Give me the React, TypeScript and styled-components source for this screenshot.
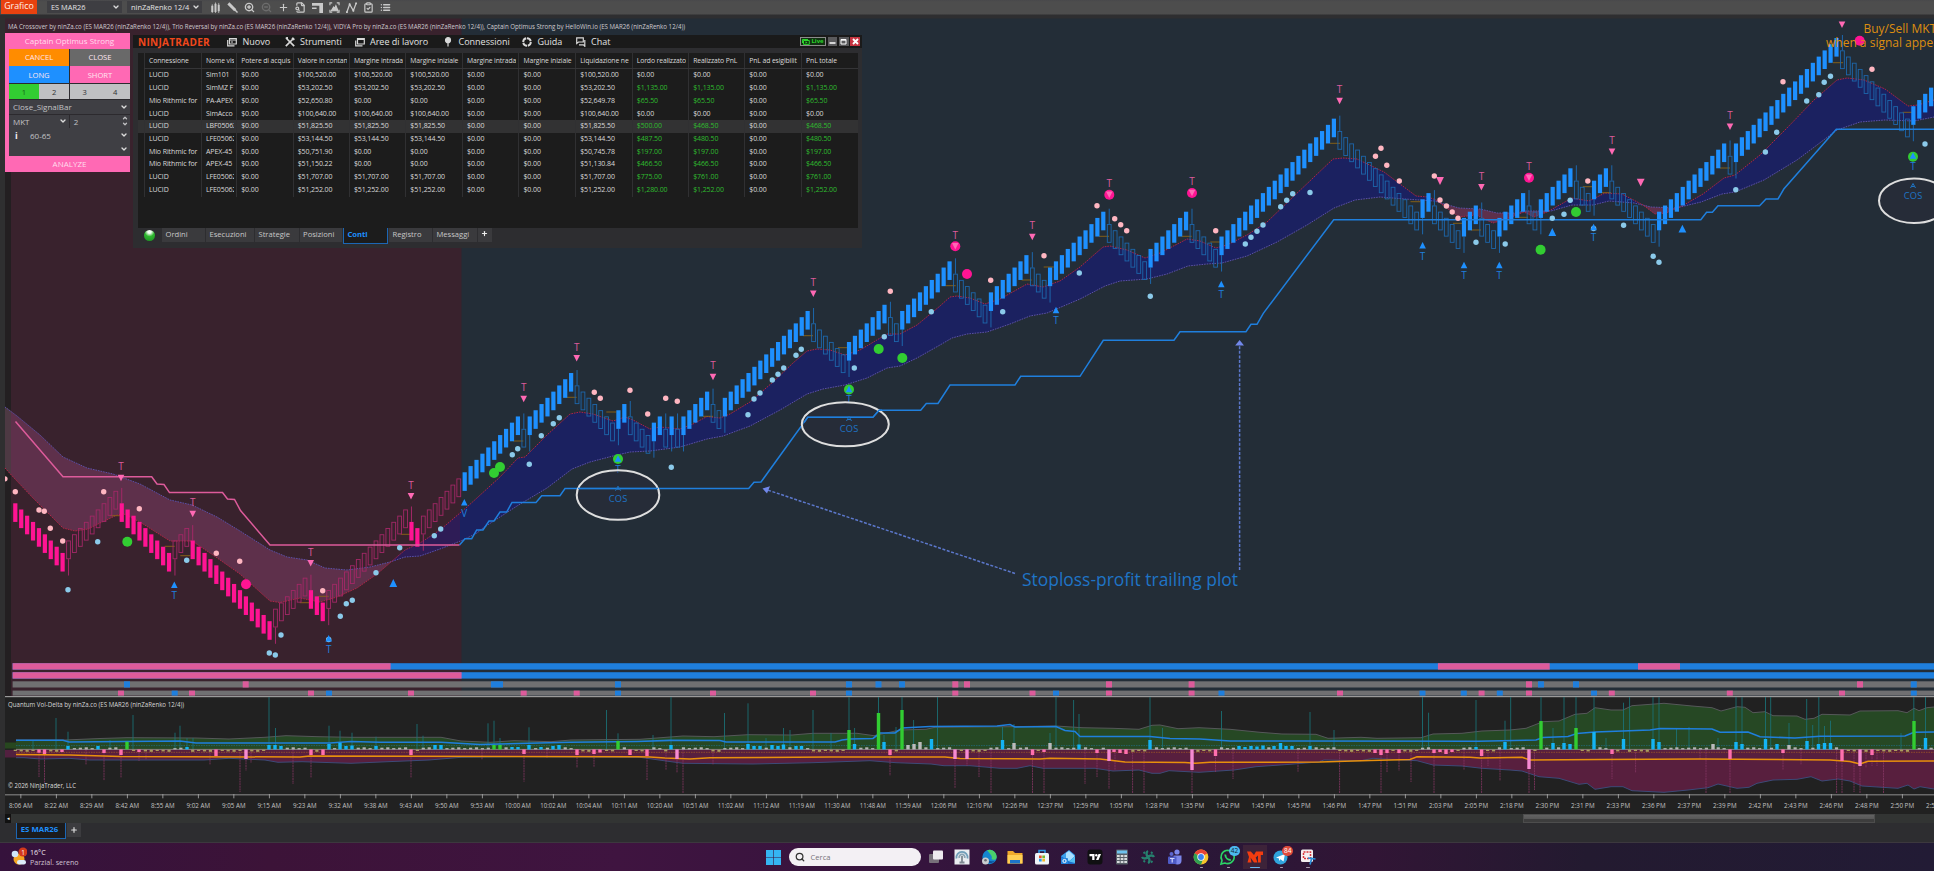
import { ReactNode } from "react";
import styled, { createGlobalStyle, css } from "styled-components";
import {
  LuChevronDown,
  LuChevronUp,
  LuClipboardCheck,
  LuFileSearch,
  LuList,
  LuPlus,
  LuSearch,
  LuZoomIn,
  LuZoomOut,
} from "react-icons/lu";

const theme = {
  font: `"Open Sans", "Noto Sans", sans-serif`,
  blue: "#1e90ff",
  midBlue: "#1f7fdd",
  dimBlue: "#1d67ac",
  pink: "#ff69b4",
  barPink: "#dd5b9b",
  deepPink: "#ff1493",
  green: "#32cd32",
  maroon: "#39222d",
  slate: "#232d37",
  navy: "#1b2160",
  plum: "#5e304b",
  panel: "#2d2d30",
  dark: "#1c1c1c",
};

type Point = [number, number];

const GlobalStyle = createGlobalStyle`
  * { box-sizing: border-box; }
  body {
    margin: 0;
    background: ${theme.panel};
    font-family: ${theme.font};
    overflow: hidden;
  }
`;

const Screen = styled.div`
  position: relative;
  width: 1934px;
  height: 871px;
  display: flex;
  flex-direction: column;
  overflow: hidden;
`;

/* ---------- top toolbar ---------- */

const Toolbar = styled.div`
  height: 18px;
  flex: none;
  display: flex;
  align-items: flex-start;
  background: linear-gradient(#48484b 0, #4d4d4d 2px, #4d4d4d 14px, #2e2e30 15px);
`;

const ChartTag = styled.div`
  width: 36px;
  height: 14px;
  margin-left: 1px;
  background: #e8420f;
  color: #fff1ea;
  font-size: 8.8px;
  line-height: 13px;
  text-align: center;
`;

const ToolbarSelect = styled.div<{ $width: number; $left: number }>`
  display: flex;
  align-items: center;
  justify-content: space-between;
  width: ${(p) => p.$width}px;
  height: 12px;
  margin: 1px 0 0 ${(p) => p.$left}px;
  padding: 0 2px 0 4px;
  background: #3e3e42;
  color: #e4e4e4;
  font-size: 7.4px;
  line-height: 12px;
  white-space: nowrap;
`;

const ToolbarIcons = styled.div`
  display: flex;
  align-items: center;
  gap: 6px;
  height: 14px;
  margin-left: 8px;
  color: #c9c9c9;
  svg {
    width: 11px;
    height: 11px;
  }
  svg:nth-child(4) {
    opacity: 0.25;
  }
`;

/* ---------- charts ---------- */

const ChartSvg = styled.svg`
  display: block;
  flex: none;
`;

const STEP_X = 5.913;
const FIRST_X = 15.3;
const BRICK = 6.204;

// Alternating run lengths, starting with a falling run.
const RUNS = [
  9, 9, 9, 3, 14, 6, 3, 14, 2, 17, 1, 8, 7, 2, 4, 2, 1, 1, 1, 5, 2, 15, 6, 7, 2,
  9, 6, 7, 3, 10, 7, 7, 5, 20, 14, 2, 5, 3, 3, 5, 2, 6, 3, 3, 8, 12, 1, 18, 12, 5,
];

interface Bar {
  x: number;
  top: number;
  up: boolean;
  reversal: boolean;
}

const bars: Bar[] = [];
RUNS.forEach((length, run) => {
  const up = run % 2 === 1;
  for (let i = 0; i < length; i++) {
    const prev = bars[bars.length - 1];
    const reversal = i === 0 && run > 0;
    const move = prev ? (reversal ? 2 : 1) * BRICK * (up ? -1 : 1) : 0;
    bars.push({
      x: FIRST_X + bars.length * STEP_X,
      top: (prev ? prev.top : 503.3) + move,
      up,
      reversal,
    });
  }
});

const fastMa: Point[] = [
  [5, 468], [15, 479], [33, 498], [63, 528], [75, 531], [88, 529], [100, 523], [117, 515], [124, 514],
  [140, 522], [170, 541], [192, 541], [213, 555], [240, 574], [270, 601], [280, 602.5], [300, 598],
  [320, 602], [337, 597], [357, 588], [377, 574], [405, 550], [420, 543], [440, 530], [467, 507],
  [500, 477], [518, 458], [525, 457], [547, 435], [570, 414], [580, 412], [593, 414], [613, 421],
  [625, 417], [633, 420], [650, 429], [660, 427], [680, 429], [693, 424], [707, 416.5], [720, 418],
  [730, 414], [750, 402], [773, 382], [793, 363], [807, 351], [817, 349], [830, 350], [845, 355],
  [860, 350], [887, 334], [900, 334], [917, 325], [940, 306], [950, 297], [957, 296], [970, 298],
  [985, 304], [1000, 299], [1027, 284], [1043, 287], [1060, 281], [1080, 267], [1103, 247],
  [1110, 246], [1127, 250], [1145, 258], [1160, 253], [1187, 239], [1200, 241], [1216, 248],
  [1227, 245], [1247, 235], [1267, 222], [1293, 197], [1333, 159], [1343, 158], [1357, 159],
  [1384, 172], [1416, 196], [1428, 197], [1436, 200], [1459, 217], [1476, 215], [1493, 223],
  [1509, 218], [1524, 212], [1534, 217], [1547, 212], [1572, 198], [1589, 201], [1605, 193],
  [1622, 194], [1643, 205], [1655, 214], [1666, 213], [1682, 206], [1703, 194], [1724, 178],
  [1735, 175], [1760, 155], [1785, 130], [1814, 100], [1837, 80], [1847, 78], [1864, 80],
  [1885, 89], [1908, 106], [1918, 105], [1934, 100],
];

const slowMa: Point[] = [
  [5, 407], [17, 416], [40, 435], [63, 457], [87, 468], [113, 474], [140, 484], [170, 500],
  [192, 505], [217, 517], [240, 531], [270, 550], [287, 557], [307, 560], [325, 568], [347, 570],
  [370, 567], [390, 562], [405, 557], [420, 556], [440, 549], [463, 540], [477, 533], [483, 528],
  [517, 506], [547, 488], [572, 469], [590, 462], [613, 456], [630, 452], [650, 451], [680, 447],
  [707, 439], [723, 436], [750, 426], [780, 410], [807, 394], [823, 389], [845, 385], [867, 378],
  [887, 368], [900, 366], [917, 358], [940, 345], [952, 338], [967, 334], [987, 332], [1010, 324],
  [1030, 316], [1047, 313], [1080, 299], [1105, 286], [1120, 281], [1147, 279], [1167, 274],
  [1188, 266], [1207, 264], [1222, 263], [1247, 256], [1277, 242], [1307, 225], [1334, 208],
  [1355, 200], [1380, 197], [1405, 199], [1434, 201], [1459, 208], [1480, 209], [1497, 213],
  [1514, 213], [1526, 211], [1551, 211], [1572, 205], [1593, 205], [1609, 201], [1634, 203],
  [1651, 207], [1676, 208], [1701, 202], [1722, 194], [1735, 192], [1764, 180], [1797, 160],
  [1837, 130], [1860, 122], [1885, 120], [1914, 121], [1934, 117],
];

const pinkStop: Point[] = [
  [15.5, 421.5], [63, 476.7], [151.7, 476.7], [157, 484], [164, 484.5], [169.5, 492.6],
  [222.5, 492.6], [227.5, 499], [234.5, 499.5], [240.5, 510.5], [270, 545], [459.5, 545],
];

const blueStop: Point[] = [
  [459.5, 545], [465, 538.7], [471.7, 538.7], [476.7, 530], [483, 530], [489, 521], [494, 521],
  [500, 512], [506.7, 512], [512, 502.4], [536, 502.4], [541.7, 495.7], [560, 495.7], [565, 488.6],
  [748.7, 488.6], [754, 482.3], [761, 482], [807.7, 417.3], [873, 417.3], [879, 410.3],
  [920.7, 410.3], [926.3, 403.5], [938, 403.4], [950, 385], [1015, 385], [1020.7, 376.3],
  [1080, 376.3], [1103.3, 340.3], [1174, 340.3], [1180, 331.7], [1246, 331.7], [1251, 324.3],
  [1257, 324.3], [1263.3, 313.3], [1333.7, 219.7], [1700.8, 219.7], [1706.6, 212.3],
  [1712.4, 212.3], [1718, 205.7], [1759.6, 205.7], [1766, 199], [1778, 199], [1783.8, 189],
  [1836.3, 129.3], [1934, 129.3],
];

const pinkDots: Point[] = [
  [15.3, 491.7], [39, 510], [44.3, 511.3], [50.3, 528.3], [62.7, 541], [103.7, 491.7],
  [139.3, 508.7], [216.3, 553.3], [239.7, 561.3], [322.7, 590.7], [594.3, 392.3], [600.3, 398.3],
  [630, 390.3], [647.7, 414], [665.7, 398.3], [677.3, 401.3], [890.3, 291.3], [990.7, 280.3],
  [1044, 255.7], [1097, 205.7], [1114.7, 218.7], [1120.7, 224.7], [1126.7, 230.7], [1215.7, 230.7],
  [1375.5, 156.3], [1381, 148.3], [1386.8, 165.3], [1399.3, 181], [1434.3, 176], [1440, 200],
  [1446.4, 206], [1452.2, 212], [1458, 218.3], [1587.8, 181], [1783, 81.7], [1872, 69.3],
];

const blueDots: Point[] = [
  [68, 589.7], [97.7, 541.7], [186.7, 560.3], [269.3, 653], [275.3, 655], [281, 635],
  [340.3, 616.3], [346.3, 603.7], [352.3, 600.3], [376, 572.7], [399.7, 547.7], [434.3, 535.7],
  [440.7, 529], [328.7, 639.5], [512.3, 454.7], [517.7, 448.7], [529.3, 464.3], [541.3, 435.7],
  [553.3, 423.7], [559.3, 417.7], [671.3, 467.3], [748, 414.7], [754, 399], [760, 393],
  [772.3, 380], [778, 374.3], [783.7, 368], [796, 355.3], [801.3, 349.3], [854.3, 368],
  [884.3, 336.7], [931.3, 311.7], [1002.7, 311.7], [1079.3, 273], [1150.3, 296.3],
  [1245.3, 244], [1251, 237.3], [1257, 231.3], [1263, 225], [1280.7, 206.7], [1286.7, 200.3],
  [1292.7, 193.7], [1310, 192.5], [1476, 242.3], [1505.2, 244], [1552.3, 218.3], [1564, 214.3],
  [1570.2, 200.3], [1593.6, 228.5], [1623.6, 225.3], [1653.2, 256.3], [1659, 262.3],
  [1735.8, 189.7], [1765.4, 152], [1776.7, 132.3], [1806.7, 101], [1818.8, 94.7],
  [1824.2, 82.3], [1830.5, 76.3], [1925, 144],
];

const goldMarks: Point[] = [
  [115.3, 515.7], [169.7, 546.3], [185.3, 555.7], [304.7, 602.7], [323.7, 596.3], [405.7, 534.3],
  [518.3, 441], [571.7, 397.3], [611.3, 412], [708, 416.3], [808, 335.7], [843, 347.7],
  [950.7, 285.7], [1026.7, 280], [1048.7, 267], [1104, 236.3], [1186.7, 236.3], [1215.3, 242],
  [1335, 143.3], [1415.5, 201.7], [1458, 223.3], [1476, 230], [1523, 217.3], [1587.8, 186.7],
  [1606, 192.7], [1725, 168], [1838, 62.7], [1907.6, 112.3],
];

const greenCircles: Point[] = [
  [127.3, 541.7], [494, 473], [500, 467], [618, 459], [849, 389.5], [878.7, 349], [902.3, 358],
  [1576, 212], [1540.6, 249.7], [1913, 156.7],
];

const pinkCircles: Point[] = [
  [246, 584.3], [955.3, 246.3], [967, 274], [1109.3, 194.7], [1192, 193], [1529, 177.7], [1859.7, 40.7],
];

const sellMarks: Point[] = [
  [121, 478], [192.7, 514], [310.7, 563.3], [411, 496.3], [523.7, 399], [576.7, 358.3],
  [713, 377], [813.3, 293.7], [955.3, 246.3], [1032.3, 237], [1109.3, 194.7], [1192, 193],
  [1339.6, 101], [1481.4, 187.3], [1529, 177.7], [1612, 151.7], [1730, 126.7], [1842, 24.7],
];

const buyMarks: [number, number, string][] = [
  [174.3, 584.7, "T"], [328.7, 638.3, "T"], [464.3, 502.3, "V"], [618, 458.5, "T"],
  [849, 389, "T"], [1056, 310, "T"], [1221.3, 284, "T"], [1422.6, 245.3, "T"], [1464, 265, "T"],
  [1499.3, 265, "T"], [1593.6, 227, "T"], [1913, 155.5, "T"],
];

const sellTurns: Point[] = [[1440, 181], [1640.7, 182.7]];
const buyTurns: Point[] = [[393.3, 583], [1552.3, 232], [1682.4, 228.7]];

const toPoints = (points: Point[]) => points.map((p) => p.join(",")).join(" ");

function valueAt(points: Point[], x: number) {
  const i = points.findIndex((p) => p[0] >= x);
  if (i <= 0) return points[0][1];
  const [x0, y0] = points[i - 1];
  const [x1, y1] = points[i];
  return y0 + ((y1 - y0) * (x - x0)) / (x1 - x0);
}

// Splits the space between the averages wherever they cross.
const clouds: { bullish: boolean; upper: Point[]; lower: Point[] }[] = [];
for (let x = 5; x <= 1934; x++) {
  const fast = valueAt(fastMa, x);
  const slow = valueAt(slowMa, x);
  const bullish = fast < slow;
  let last = clouds[clouds.length - 1];
  if (!last || last.bullish !== bullish) {
    last = { bullish, upper: [], lower: [] };
    clouds.push(last);
  }
  last.upper.push([x, fast]);
  last.lower.unshift([x, slow]);
}

function Triangle({ x, y, size, up, fill }: { x: number; y: number; size: number; up?: boolean; fill: string }) {
  const d = up ? -size : size;
  return <polygon points={`${x - size},${y - d} ${x + size},${y - d} ${x},${y + d}`} fill={fill} />;
}

function Candle({ bar, prev }: { bar: Bar; prev?: Bar }) {
  const height = BRICK * 3;
  const bear = bar.x < 461;
  const solid = bear ? !bar.up : bar.up;
  const color = bear ? (solid ? theme.deepPink : "#a32867") : solid ? theme.blue : theme.dimBlue;
  const wickColor = bear ? "#a32867" : theme.dimBlue;
  const wickEnd = prev && (bar.up ? prev.top + height + 4 : prev.top - 3);
  return (
    <g>
      {bar.reversal && (
        <line x1={bar.x} x2={bar.x} y1={bar.up ? bar.top + height : bar.top} y2={wickEnd} stroke={wickColor} />
      )}
      {solid ? (
        <rect x={bar.x - 2.1} y={bar.top} width={4.2} height={height} fill={color} />
      ) : (
        <rect x={bar.x - 1.9} y={bar.top + 0.4} width={3.8} height={height - 0.8} fill="none" stroke={color} strokeWidth={0.9} />
      )}
    </g>
  );
}

interface Strip {
  y: number;
  height: number;
  base: string;
  marks: [number, number, string][];
}

const P = theme.barPink;
const B = theme.midBlue;
const square = (xs: number[], color: string): [number, number, string][] => xs.map((x) => [x - 3, 6, color]);

const strips: Strip[] = [
  { y: 663.2, height: 6.4, base: B, marks: [[12.6, 378, P], [1437.9, 111.8, P], [1638, 42, P]] },
  { y: 672.2, height: 6.4, base: B, marks: [[12.6, 449, P]] },
  {
    y: 681.3,
    height: 6.2,
    base: "#707072",
    marks: [
      ...square([127, 494, 500, 618, 849, 878.5, 902, 1541, 1576, 1913.8], B),
      ...square([245.7, 955.3, 967, 1109, 1191.6, 1529, 1860], P),
    ],
  },
  {
    y: 690.6,
    height: 5,
    base: "#707072",
    marks: [
      ...square([174.7, 329, 618, 849, 1056, 1221.5, 1422.5, 1463.8, 1499.8, 1594, 1913.8], B),
      ...square([121, 192, 311, 411, 523.7, 576.7, 713, 813, 955.3, 1032.5, 1109, 1191.6, 1340, 1481.6, 1529, 1611.8, 1729.8, 1842], P),
    ],
  },
];

const ellipses: [number, number, number, number][] = [
  [618, 495, 41.3, 24.8],
  [845.3, 424.3, 43.5, 22],
  [1914, 200.7, 35, 22.3],
];
const cosLabels: Point[] = [[618, 498.7], [849, 429], [1913, 196]];

function PriceChart() {
  return (
    <ChartSvg width="1934" height="678" viewBox="0 18 1934 678" fontFamily={theme.font}>
      <rect y="18" width="1934" height="678" fill="#2f2f30" />
      <rect x="5" y="18.5" width="457" height="678" fill={theme.maroon} />
      <rect x="5" y="35" width="6" height="662" fill="#231f21" />
      <rect x="461.5" y="18.5" width="1473" height="678" fill={theme.slate} />
      <text x="8" y="28.5" fontSize="7.4" fill="#cfcbcf" textLength="677" lengthAdjust="spacingAndGlyphs">
        MA Crossover by ninZa.co (ES MAR26 (ninZaRenko 12/4)), Trio Reversal by ninZa.co (ES MAR26 (ninZaRenko
        12/4)), VIDYA Pro by ninZa.co (ES MAR26 (ninZaRenko 12/4)), Captain Optimus Strong by HelloWin.io (ES
        MAR26 (ninZaRenko 12/4))
      </text>

      {clouds.map((cloud, i) => (
        <polygon
          key={i}
          points={toPoints([...cloud.upper, ...cloud.lower])}
          fill={cloud.bullish ? theme.navy : theme.plum}
        />
      ))}
      <polygon points={toPoints([...clouds[1].upper, ...clouds[1].lower].filter((p) => p[0] < 461))} fill="#2e1c56" />
      <polygon points="5,407 11,411 11,475 5,468" fill="#4d3943" />
      <polyline points={toPoints(slowMa)} fill="none" stroke="#5b50a8" strokeDasharray="1.6 1" />
      <polyline points={toPoints(fastMa)} fill="none" stroke="#b02545" strokeDasharray="1.6 1" />

      {goldMarks.map(([x, y], i) => (
        <line key={i} x1={x - 5} x2={x + 5} y1={y} y2={y} stroke="#8d6414" strokeWidth={0.9} />
      ))}
      {bars.map((bar, i) => (
        <Candle key={i} bar={bar} prev={bars[i - 1]} />
      ))}

      <polyline points={toPoints(pinkStop)} fill="none" stroke={theme.barPink} strokeWidth={1.5} />
      <polyline points={toPoints(blueStop)} fill="none" stroke={theme.midBlue} strokeWidth={1.5} />

      <path d="M5 476.2A2.600 2.600 0 0 1 5 481.400Z" fill="#ffb6c1" />
      {pinkDots.map(([x, y], i) => (
        <circle key={i} cx={x} cy={y} r={2.7} fill="#ffb6c1" />
      ))}
      {greenCircles.map(([x, y], i) => (
        <circle key={i} cx={x} cy={y} r={5} fill={theme.green} />
      ))}
      {pinkCircles.map(([x, y], i) => (
        <circle key={i} cx={x} cy={y} r={5} fill={theme.deepPink} />
      ))}
      {blueDots.map(([x, y], i) => (
        <circle key={i} cx={x} cy={y} r={2.7} fill="#8bcaea" />
      ))}

      <g fontSize="10" textAnchor="middle">
        {sellMarks.map(([x, y], i) => (
          <g key={i}>
            <Triangle x={x} y={y} size={3.3} fill={theme.pink} />
            {y > 30 && (
              <text x={x} y={y - 7.6} fill={theme.barPink}>
                T
              </text>
            )}
          </g>
        ))}
        {buyMarks.map(([x, y, label], i) => (
          <g key={i}>
            <Triangle x={x} y={y} size={3.3} up fill={theme.blue} />
            <text x={x} y={y + 14.4} fill={theme.midBlue}>
              {label}
            </text>
          </g>
        ))}
      </g>
      {sellTurns.map(([x, y], i) => (
        <Triangle key={i} x={x} y={y} size={3.9} fill={theme.pink} />
      ))}
      {buyTurns.map(([x, y], i) => (
        <Triangle key={i} x={x} y={y} size={3.9} up fill={theme.blue} />
      ))}

      {ellipses.map(([cx, cy, rx, ry], i) => (
        <ellipse key={i} cx={cx} cy={cy} rx={rx} ry={ry} fill="#2a2a3a" fillOpacity={0.4} stroke="#dedede" strokeWidth={2} />
      ))}
      <g stroke={theme.midBlue} strokeWidth={1.5} fill="none">
        <polyline points="578,488.6 658,488.6" />
        <polyline points="804,422.5 807.7,417.3 873,417.3 879,410.3 882,410.3" />
      </g>
      <g fill="#1f74c4" fontSize="9.3" textAnchor="middle">
        {cosLabels.map(([x, y], i) => (
          <g key={i}>
            <text x={x} y={y + 3.4} textLength="18.5">
              COS
            </text>
            <path d={`M${x - 2.5} ${y - 8} L${x} ${y - 12.5} L${x + 2.5} ${y - 8} M${x - 1.5} ${y - 9.5} H${x + 1.5}`} fill="none" stroke="#1f74c4" />
          </g>
        ))}
      </g>

      <g stroke="#5c78cc" strokeWidth={1.5} strokeDasharray="3 1.6">
        <line x1="1015" y1="573.5" x2="767" y2="489.8" />
        <line x1="1239.6" y1="570" x2="1239.6" y2="345" />
      </g>
      <g fill="#7288ea">
        <polygon points="762.5,488.6 770,486.3 767,493.6" />
        <polygon points="1239.6,340 1244,345.4 1235.2,345.4" />
      </g>
      <text x="1022" y="585.800" fontSize="17.500" fill="#1f74c6" textLength="216" lengthAdjust="spacingAndGlyphs">
        Stoploss-profit trailing plot
      </text>
      <g fill="#dd8d10" fontSize="12">
        <text x="1863.5" y="33.200">Buy/Sell MKT</text>
        <text x="1826" y="47.200">when a signal appears</text>
      </g>

      {strips.map((strip) => (
        <g key={strip.y}>
          <rect x={12.6} y={strip.y} width={1922} height={strip.height} fill={strip.base} />
          {strip.marks.map(([x, width, color]) => (
            <rect key={x} x={x} y={strip.y} width={width} height={strip.height} fill={color} />
          ))}
        </g>
      ))}
    </ChartSvg>
  );
}

/* ---------- volume delta panel ---------- */

const ZERO = 749.4;

const upperBand: Point[] = [
  [16, 740], [65, 740], [100, 738.5], [127, 737.7], [196, 738], [229, 739], [265, 737.3], [286, 735.7],
  [318, 736.7], [351, 737.3], [441, 737.3], [461, 741], [490, 742.3], [514, 740.7], [551, 741.7],
  [571, 740], [640, 739.3], [683, 736], [714, 736.7], [748, 734.7], [792, 735], [813, 733.3],
  [857, 733.3], [874, 735.7], [900, 730], [926, 729.3], [935, 727.3], [1009, 726.7], [1056, 726],
  [1082, 727.7], [1113, 728.3], [1139, 729.3], [1152, 725.3], [1160, 725], [1178, 728.7],
  [1199, 727.7], [1230, 729.3], [1260, 732.3], [1282, 734], [1316, 734.3], [1328, 738.3],
  [1361, 737.3], [1377, 738.3], [1421, 737.7], [1433, 734], [1462, 733.3], [1482, 731], [1510, 730],
  [1526, 728.3], [1543, 721.7], [1559, 721], [1575, 714.3], [1587, 713.3], [1595, 707.7],
  [1611, 710], [1623, 710], [1632, 705.7], [1664, 703.3], [1692, 706], [1712, 707.7], [1721, 711],
  [1737, 706.7], [1745, 707.3], [1753, 712.7], [1765, 711.7], [1773, 715.7], [1797, 716],
  [1805, 719.3], [1814, 718.3], [1822, 714.3], [1850, 715], [1860, 711], [1898, 710.7],
  [1907, 712.7], [1914, 708.3], [1919, 710.7], [1927, 707.7], [1934, 707],
];

const lowerBand: Point[] = [
  [16, 757.7], [24, 757.7], [41, 759], [69, 758.3], [90, 760], [204, 760], [229, 758.3], [265, 760],
  [278, 762.3], [302, 761.7], [351, 763.3], [388, 761.7], [429, 760], [461, 757.3], [518, 756.7],
  [640, 757.3], [666, 761], [683, 763.3], [753, 764], [813, 762.7], [870, 760.7], [896, 762.7],
  [931, 764], [944, 765.7], [970, 765.7], [1000, 768.3], [1017, 768.3], [1030, 765.7],
  [1043, 768.3], [1095, 768.3], [1113, 771], [1139, 770], [1152, 773.3], [1160, 773.3],
  [1169, 770.7], [1199, 772.3], [1234, 770], [1256, 766.7], [1290, 764.3], [1318, 762],
  [1324, 760], [1361, 760.7], [1373, 758.3], [1401, 760], [1417, 760.7], [1433, 765], [1462, 766],
  [1482, 768.3], [1510, 770], [1522, 771], [1539, 776.7], [1559, 778.3], [1579, 784.3],
  [1587, 783.3], [1595, 789.3], [1611, 786.7], [1623, 786.7], [1632, 790.7], [1664, 792.3],
  [1688, 790], [1708, 787.7], [1718, 784], [1737, 788.3], [1749, 787.3], [1757, 783.3],
  [1773, 780], [1797, 779.3], [1811, 776.7], [1822, 781], [1838, 779], [1850, 781], [1862, 786],
  [1898, 788.3], [1908, 785], [1914, 789], [1920, 786.7], [1934, 789],
];

const buyLine: Point[] = [
  [16, 740.3], [63, 740.3], [69, 742], [180, 741], [196, 743], [330, 743], [351, 741.5], [380, 742.3],
  [441, 742.3], [480, 744.5], [500, 744], [570, 742.3], [637, 741.5], [670, 740.4], [720, 740.5],
  [726, 742], [835, 742], [842, 740], [850, 739], [873, 738.5], [880, 733], [895, 733], [902, 728],
  [930, 726.5], [997, 726], [1010, 724.5], [1015, 727], [1056, 726.5], [1065, 730.5],
  [1075, 731.5], [1080, 736.5], [1150, 736.5], [1170, 738.5], [1200, 739], [1230, 741],
  [1300, 741], [1478, 741.3], [1536, 740], [1543, 737.5], [1568, 736.5], [1577, 733.5],
  [1595, 732], [1650, 730], [1660, 728.5], [1712, 729], [1720, 732.3], [1748, 732],
  [1760, 736.7], [1795, 738], [1820, 736.3], [1905, 736], [1914, 732.3], [1934, 732],
];

const sellLine: Point[] = [
  [16, 754.5], [70, 755], [120, 756.5], [300, 757], [310, 756], [637, 756.8], [650, 757], [665, 758],
  [690, 759], [710, 757.7], [830, 757], [945, 757], [960, 758.5], [1040, 759], [1050, 758.3],
  [1100, 759], [1125, 762], [1185, 762.5], [1195, 763.3], [1210, 762.3], [1320, 762],
  [1370, 760.5], [1410, 759.5], [1417, 756.7], [1470, 757.3], [1480, 758], [1522, 757.3],
  [1530, 760], [1600, 759.5], [1700, 759], [1830, 760], [1850, 761.5], [1860, 764],
  [1868, 761.3], [1934, 761],
];

const upSpikes: Point[] = [
  [33, 741], [56, 718], [68, 731.7], [110, 740], [133, 715], [175, 732.7], [180, 725.7], [187, 738],
  [193, 738], [269, 697], [275.5, 728], [329, 725.7], [340, 730.7], [352, 732.7], [376, 736.7],
  [417, 724], [423, 735.7], [488, 723.3], [494, 720.7], [500, 738], [529, 727.3], [606.5, 710],
  [618, 733.3], [653, 735], [671, 697], [724.5, 713], [748, 703.3], [766, 738], [783.5, 728],
  [790, 730], [813, 710], [831, 733], [849, 697], [854.6, 728], [878.5, 697], [884, 735],
  [896, 727], [902, 697], [913.6, 720], [937.5, 697], [1002.5, 727], [1014, 724], [1050, 733],
  [1056, 697], [1073.6, 700], [1079, 714], [1150, 697], [1162.5, 728], [1221.5, 711], [1310, 712],
  [1334, 730], [1422.5, 697], [1428.6, 712.7], [1476, 700], [1505, 720.7], [1510.7, 697],
  [1541, 697], [1553, 728], [1564, 697], [1576, 697], [1594, 697], [1606, 738], [1623.5, 702.7],
  [1629.6, 697], [1653, 697], [1659, 697], [1676.5, 729], [1689, 727], [1718, 738], [1736, 697],
  [1742, 697], [1765.5, 697], [1770.7, 697], [1789, 723], [1806.7, 699], [1812.7, 725],
  [1818.8, 697], [1824.5, 726], [1830.5, 720.7], [1901, 733], [1913.8, 697], [1925.5, 697],
];

const downSpikes: Point[] = [
  [39, 777], [44.5, 783], [86, 765], [104, 780.7], [121, 778], [139, 761], [146, 760], [210, 765],
  [240, 792], [246, 770.7], [251, 763], [293, 784], [311, 778], [411, 778], [482, 760], [524, 781.7],
  [547, 758], [577, 768], [594, 766.7], [647, 780], [666, 770], [677, 773], [683, 793], [713, 765],
  [890, 775.7], [955, 788], [967, 766], [979, 777], [991, 793], [1032.5, 793], [1044, 793],
  [1085, 784], [1097, 777], [1109, 789], [1115, 770], [1132.6, 793], [1144, 793], [1192, 793],
  [1215.5, 772], [1233, 779], [1298, 771.7], [1339.6, 793], [1381, 793], [1387, 772],
  [1399, 770.7], [1411, 782], [1434, 793], [1464, 770], [1481.6, 793], [1488, 766], [1500, 781],
  [1529, 793], [1534.5, 790], [1612, 779], [1635.6, 773], [1700, 760], [1706, 793], [1730, 793],
  [1783, 770], [1801, 765], [1836.6, 793], [1842, 793], [1854, 792], [1860, 793], [1866, 768],
  [1872, 766], [1877, 766], [1883.5, 793],
];

const GREEN = "#32cd32";
const CYAN = "#14b4f4";
const ROSE = "#ff6fae";
const VIOLET = "#f78ad2";

const volumeBars: [number, number, string][] = [
  [127, 741.7, GREEN], [494, 745, GREEN], [500, 745, GREEN], [618, 741, GREEN], [849, 730, GREEN],
  [878.5, 713, GREEN], [902, 710, GREEN], [1541, 721, GREEN], [1576, 728, GREEN], [1914, 721, GREEN],
  [68, 746, CYAN], [98, 746, CYAN], [187, 747, CYAN], [269, 745, CYAN], [275, 745, CYAN],
  [281, 746, CYAN], [329, 744, CYAN], [340, 742.7, CYAN], [346, 746, CYAN], [352, 745.5, CYAN],
  [376, 746, CYAN], [435, 745, CYAN], [441, 745, CYAN], [512, 747, CYAN], [518, 747, CYAN],
  [529, 745, CYAN], [541, 747, CYAN], [553, 746, CYAN], [559, 745, CYAN], [671, 745, CYAN],
  [748, 744, CYAN], [754, 746, CYAN], [760, 746, CYAN], [772, 745, CYAN], [778, 746, CYAN],
  [783.5, 744.5, CYAN], [796, 746, CYAN], [801.5, 746, CYAN], [854.5, 744, CYAN], [884, 742, CYAN],
  [931.5, 739, CYAN], [1002.5, 740, CYAN], [1079, 744.5, CYAN], [1150, 740, CYAN],
  [1239, 746, CYAN], [1245, 747, CYAN], [1251, 746, CYAN], [1257, 746.5, CYAN], [1263, 745.5, CYAN],
  [1274, 746, CYAN], [1280.5, 743, CYAN], [1286, 746, CYAN], [1292, 746, CYAN], [1310, 746, CYAN],
  [1476, 747, CYAN], [1505, 742, CYAN], [1553, 743, CYAN], [1564, 743, CYAN], [1570, 744, CYAN],
  [1594, 732, CYAN], [1623.5, 739, CYAN], [1653, 739, CYAN], [1659, 742, CYAN], [1736, 742, CYAN],
  [1742, 744, CYAN], [1765.5, 739, CYAN], [1777, 744, CYAN], [1807, 741, CYAN], [1818.5, 744, CYAN],
  [1824.5, 743, CYAN], [1830.5, 743, CYAN], [1925.5, 738, CYAN],
  [908, 745, "#bbb"], [914, 744, "#bbb"], [920, 742, "#bbb"], [1014, 743, "#bbb"], [1050, 743, "#bbb"],
  [1713, 744, "#bbb"], [1789, 745, "#bbb"],
  [39, 752.7, ROSE], [44.5, 754, ROSE], [62, 752, ROSE], [104, 753, ROSE], [121, 755, ROSE],
  [139, 752, ROSE], [216, 756, ROSE], [311, 755, ROSE], [323, 755, ROSE], [411, 755, ROSE],
  [524, 754, ROSE], [577, 755, ROSE], [594, 754, ROSE], [600, 752.5, ROSE], [630, 755, ROSE],
  [647, 756, ROSE], [890, 755, ROSE], [1032.5, 755, ROSE], [1044, 752, ROSE], [1097, 753, ROSE],
  [1114, 752, ROSE], [1120, 753, ROSE], [1126, 754, ROSE], [1215.5, 756, ROSE], [1375, 753, ROSE],
  [1381, 755, ROSE], [1387, 753, ROSE], [1399, 753, ROSE], [1434, 753, ROSE], [1440, 752, ROSE],
  [1446, 754, ROSE], [1452, 752, ROSE], [1481.6, 756, ROSE], [1612, 754, ROSE], [1730, 759, ROSE],
  [1783, 753, ROSE], [1842, 761, ROSE], [1872, 755, ROSE],
  [246, 759, VIOLET], [677, 759, VIOLET], [955, 759, VIOLET], [967, 759, VIOLET],
  [1109, 761, VIOLET], [1192, 770, VIOLET], [1529, 769, VIOLET], [1860, 766, VIOLET],
];

const times = [
  "8:06 AM", "8:22 AM", "8:29 AM", "8:42 AM", "8:55 AM", "9:02 AM", "9:05 AM", "9:15 AM", "9:23 AM",
  "9:32 AM", "9:38 AM", "9:43 AM", "9:50 AM", "9:53 AM", "10:00 AM", "10:02 AM", "10:04 AM",
  "10:11 AM", "10:20 AM", "10:51 AM", "11:02 AM", "11:12 AM", "11:19 AM", "11:30 AM", "11:48 AM",
  "11:59 AM", "12:06 PM", "12:10 PM", "12:26 PM", "12:37 PM", "12:59 PM", "1:05 PM", "1:28 PM",
  "1:35 PM", "1:42 PM", "1:45 PM", "1:45 PM", "1:46 PM", "1:47 PM", "1:51 PM", "2:03 PM", "2:05 PM",
  "2:18 PM", "2:30 PM", "2:31 PM", "2:33 PM", "2:36 PM", "2:37 PM", "2:39 PM", "2:42 PM", "2:43 PM",
  "2:46 PM", "2:48 PM", "2:50 PM", "2:51 PM",
];

function DeltaChart() {
  const tall = volumeBars.map((v) => v[0]);
  const small = bars.filter((bar) => !tall.some((x) => Math.abs(x - bar.x) < 3));
  return (
    <ChartSvg width="1934" height="118" viewBox="0 696 1934 118" fontFamily={theme.font}>
      <rect y="696" width="1934" height="118" fill="#2f2f30" />
      <rect x="5" y="696" width="1929" height="118" fill="#212121" />
      <rect x="5" y="696" width="1929" height="1.2" fill="#9a9a9a" />
      <rect x="5" y="742.5" width="11" height="6" fill="#27471f" />
      <rect x="5" y="750" width="11" height="7.5" fill="#52203f" />
      <polygon points={toPoints([...upperBand, [1934, ZERO], [16, ZERO]])} fill="#264824" />
      <polygon points={toPoints([...lowerBand, [1934, ZERO], [16, ZERO]])} fill="#581f3e" />
      <polyline points={toPoints(upperBand)} fill="none" stroke="#56585a" />
      <polyline points={toPoints(lowerBand)} fill="none" stroke="#3d4a78" />
      {upSpikes.map(([x, y]) => (
        <line key={x} x1={x} x2={x} y1={y} y2={ZERO} stroke="#1b7378" opacity={0.85} />
      ))}
      {downSpikes.map(([x, y]) => (
        <line key={x} x1={x} x2={x} y1={ZERO} y2={y} stroke="#843763" opacity={0.8} strokeDasharray="2 0.6" />
      ))}
      <line x1="16" x2="1934" y1="745.6" y2="745.6" stroke="#226a78" strokeWidth={0.8} strokeDasharray="1.5 1" />
      <line x1="16" x2="1934" y1="752.3" y2="752.3" stroke="#9c5527" strokeWidth={0.8} strokeDasharray="1.5 1" />
      <polyline points={toPoints(buyLine)} fill="none" stroke={theme.midBlue} strokeWidth={1.6} />
      <polyline points={toPoints(sellLine)} fill="none" stroke="#e8900c" strokeWidth={1.5} />
      <line x1="16" x2="1934" y1={ZERO} y2={ZERO} stroke="#9b8d94" strokeWidth={0.8} />
      {small.map((bar, i) => (
        <rect
          key={i}
          x={bar.x - 1.6}
          y={bar.up ? ZERO - 1.3 - (i % 3) * 0.4 : ZERO + 0.3}
          width={3.2}
          height={1.3 + (i % 3) * 0.4}
          fill={bar.up ? "#b3b3b3" : "#aa9c5c"}
        />
      ))}
      {volumeBars.map(([x, y, color]) => (
        <rect key={x} x={x - 1.7} y={Math.min(y, ZERO)} width={3.4} height={Math.abs(ZERO - y)} fill={color} />
      ))}
      <text x="8" y="706.8" fontSize="7.4" fill="#d6d6d6" textLength="176" lengthAdjust="spacingAndGlyphs">
        Quantum Vol-Delta by ninZa.co (ES MAR26 (ninZaRenko 12/4))
      </text>
      <text x="8" y="788.2" fontSize="7.4" fill="#dcdcdc" textLength="68" lengthAdjust="spacingAndGlyphs">
        © 2026 NinjaTrader, LLC
      </text>
      <rect x="5" y="794" width="1929" height="1.5" fill="#6a6a6a" />
      <g fontSize="7.3" fill="#c2c2c2" textAnchor="middle">
        {times.map((time, i) => {
          const x = 20.8 + i * 35.5;
          return (
            <g key={i}>
              <rect x={x - 0.4} y="794" width="0.9" height="4.3" fill="#a0a0a0" />
              <text x={x} y="808.4" textLength={time.length > 7 ? 26 : 23.5} lengthAdjust="spacingAndGlyphs">
                {time}
              </text>
            </g>
          );
        })}
      </g>
    </ChartSvg>
  );
}

/* ---------- order panel ---------- */

const OrderPanel = styled.div`
  position: absolute;
  left: 5px;
  top: 33px;
  width: 125px;
  padding-left: 4px;
  background: ${theme.pink};
  display: flex;
  flex-direction: column;
  font-size: 7.6px;
`;

const OrderTitle = styled.div`
  height: 15.8px;
  line-height: 15.4px;
  text-align: center;
  color: #ffdcec;
  font-size: 8px;
`;

const OrderRow = styled.div<{ $height: number }>`
  display: flex;
  gap: 0.7px;
  height: ${(p) => p.$height}px;
  padding-bottom: 0.7px;
  background: #2c2a2e;
`;

const OrderButton = styled.div<{ $bg: string; $color?: string }>`
  flex: 1;
  display: flex;
  align-items: center;
  justify-content: center;
  background: ${(p) => p.$bg};
  color: ${(p) => p.$color ?? "#ffe6f1"};
`;

const OrderField = styled.div<{ $width?: number }>`
  ${(p) =>
    p.$width
      ? css`
          width: ${p.$width}px;
        `
      : css`
          flex: 1;
        `}
  display: flex;
  align-items: center;
  padding: 0 2px 0 4px;
  background: #3f3f44;
  color: #c2c2c4;
  font-size: 8px;
  > :last-child {
    margin-left: auto;
  }
`;

const InfoMark = styled.b`
  width: 17px;
  padding-left: 2px;
  color: #f0f0f0;
  font-size: 9px;
`;

const Spinner = styled.span`
  display: flex;
  flex-direction: column;
`;

const chevron = <LuChevronDown size={8} strokeWidth={4} color="#dcdcdc" />;

function OrderEntry() {
  return (
    <OrderPanel>
      <OrderTitle>Captain Optimus Strong</OrderTitle>
      <OrderRow $height={17.6}>
        <OrderButton $bg="#ff8c00">CANCEL</OrderButton>
        <OrderButton $bg="#696969">CLOSE</OrderButton>
      </OrderRow>
      <OrderRow $height={17.6}>
        <OrderButton $bg={theme.blue}>LONG</OrderButton>
        <OrderButton $bg={theme.pink}>SHORT</OrderButton>
      </OrderRow>
      <OrderRow $height={15.8}>
        {[1, 2, 3, 4].map((n) => (
          <OrderButton key={n} $bg={n === 1 ? theme.green : "#c0c0c2"} $color={n === 1 ? "#176317" : "#333"}>
            {n}
          </OrderButton>
        ))}
      </OrderRow>
      <OrderRow $height={14.8}>
        <OrderField>Close_SignalBar {chevron}</OrderField>
      </OrderRow>
      <OrderRow $height={13.8}>
        <OrderField $width={60}>MKT {chevron}</OrderField>
        <OrderField>
          2
          <Spinner>
            <LuChevronUp size={6} strokeWidth={5} />
            <LuChevronDown size={6} strokeWidth={5} />
          </Spinner>
        </OrderField>
      </OrderRow>
      <OrderRow $height={14}>
        <OrderField>
          <InfoMark>i</InfoMark> 60-65 {chevron}
        </OrderField>
      </OrderRow>
      <OrderRow $height={14}>
        <OrderField>{chevron}</OrderField>
      </OrderRow>
      <OrderTitle>ANALYZE</OrderTitle>
    </OrderPanel>
  );
}

/* ---------- accounts window ---------- */

const Window = styled.div`
  position: absolute;
  left: 133px;
  top: 35px;
  width: 729px;
  height: 213px;
  padding: 0 4px 0 5px;
  background: ${theme.panel};
`;

const TitleBar = styled.div`
  display: flex;
  align-items: center;
  height: 13px;
  margin: 0 -4px 5px -5px;
  padding-left: 5px;
  background: #1a1a1a;
`;

const Logo = styled.div`
  width: 89px;
  color: #f0481c;
  font-size: 10px;
  font-weight: 700;
  letter-spacing: 0.3px;
`;

const MenuItem = styled.div<{ $width: number }>`
  display: flex;
  align-items: center;
  gap: 5.5px;
  width: ${(p) => p.$width}px;
  color: #e2e2e2;
  font-size: 9px;
  white-space: nowrap;
  svg {
    flex: none;
  }
`;

const LiveBadge = styled.div`
  display: flex;
  align-items: center;
  justify-content: center;
  gap: 1.5px;
  width: 26px;
  height: 9.5px;
  margin-left: auto;
  border: 1px solid #8b8b8b;
  background: #123012;
  color: #2bd42b;
  font-size: 6px;
  font-weight: 700;
  line-height: 7px;
`;

const WindowButton = styled.div<{ $close?: boolean }>`
  display: flex;
  align-items: center;
  justify-content: center;
  width: 9.6px;
  height: 9.5px;
  margin-left: 1.8px;
  margin-right: ${(p) => (p.$close ? 2 : 0)}px;
  background: ${(p) => (p.$close ? "#c63340" : "#5a5a5c")};
`;

const Grid = styled.div`
  height: 175px;
  padding-left: 6px;
  background: ${theme.dark};
`;

const GridRow = styled.div<{ $header?: boolean; $selected?: boolean }>`
  display: grid;
  grid-template-columns: 57px 35.2px 56.5px 56.2px 56.4px 56.8px 56.4px 56.7px 56.6px 56.4px 56.2px 56.8px 56px;
  height: ${(p) => (p.$header ? 16.4 : 12.72)}px;
  line-height: ${(p) => (p.$header ? 16.4 : 12.4)}px;
  ${(p) => p.$header && `border-bottom: 1px solid #353537;`}
  ${(p) => p.$selected && `background: #323233; margin-left: -6px; padding-left: 6px;`}
`;

const Cell = styled.div<{ $green?: boolean; $header?: boolean }>`
  overflow: hidden;
  margin-right: 2px;
  padding-left: 4px;
  border-left: 1px solid #303032;
  color: ${(p) => (p.$green ? "#2fbd2f" : "#dadada")};
  font-size: ${(p) => (p.$header ? 6.8 : 7)}px;
  letter-spacing: -0.1px;
  white-space: nowrap;
`;

const headers = [
  "Connessione", "Nome vis", "Potere di acquis", "Valore in contan", "Margine intrada",
  "Margine iniziale", "Margine intrada", "Margine iniziale", "Liquidazione ne", "Lordo realizzato",
  "Realizzato PnL", "PnL ad esigibilit", "PnL totale",
];

// connection, account, cash value, margin, net liquidation, gross, realized
const accounts = [
  ["LUCID", "Sim101", "100,520.00", "100,520.00", "100,520.00", "0.00", "0.00"],
  ["LUCID", "SimMZ F", "53,202.50", "53,202.50", "53,202.50", "1,135.00", "1,135.00"],
  ["Mio Rithmic for", "PA-APEX", "52,650.80", "0.00", "52,649.78", "65.50", "65.50"],
  ["LUCID", "SimAcco", "100,640.00", "100,640.00", "100,640.00", "0.00", "0.00"],
  ["LUCID", "LBF05062", "51,825.50", "51,825.50", "51,825.50", "500.00", "468.50"],
  ["LUCID", "LFE05062", "53,144.50", "53,144.50", "53,144.50", "487.50", "480.50"],
  ["Mio Rithmic for", "APEX-45", "50,751.90", "0.00", "50,745.78", "197.00", "197.00"],
  ["Mio Rithmic for", "APEX-45", "51,150.22", "0.00", "51,130.84", "466.50", "466.50"],
  ["LUCID", "LFE05062", "51,707.00", "51,707.00", "51,707.00", "775.00", "761.00"],
  ["LUCID", "LFE05062", "51,252.00", "51,252.00", "51,252.00", "1,280.00", "1,252.00"],
];

const TabBar = styled.div`
  display: flex;
  align-items: flex-start;
  gap: 1px;
  padding-left: 6px;
`;

const StatusOrb = styled.div`
  width: 11px;
  height: 11px;
  margin: 2px 6px 0 0;
  border-radius: 50%;
  background: radial-gradient(circle at 50% 15%, #f4fff4 0 15%, #2eb82e 45%, #1c8d24);
`;

const Tab = styled.div<{ $width: number; $active?: boolean }>`
  width: ${(p) => p.$width}px;
  height: ${(p) => (p.$active ? 16 : 13.5)}px;
  padding-left: 3.5px;
  background: ${(p) => (p.$active ? theme.dark : "#3a3a3d")};
  color: ${(p) => (p.$active ? theme.blue : "#c8c8c8")};
  ${(p) => p.$active && `border: 1px solid #1c66b4; border-top: 0; font-weight: 700;`}
  font-size: 7.6px;
  line-height: 12.5px;
`;

const menuIcon = (children: ReactNode) => (
  <svg width="10" height="10" viewBox="0 0 10 10" fill="none" stroke="#d8d8d8" strokeWidth="1.2">
    {children}
  </svg>
);

function AccountsWindow() {
  return (
    <Window>
      <TitleBar>
        <Logo>NINJATRADER</Logo>
        <MenuItem $width={57.5}>
          {menuIcon(<path d="M2.5 1.5H9.3V7H2.5ZM2.5 3H9.3M.7 3V8.8H7.5M4 5H6" />)}
          Nuovo
        </MenuItem>
        <MenuItem $width={70}>
          {menuIcon(<path d="M.8 9.2L9 1M1 1L9.2 9.2M7 .8L9.3 3M.8 1L3 .8" strokeWidth="1.7" />)}
          Strumenti
        </MenuItem>
        <MenuItem $width={88.5}>
          {menuIcon(<path d="M2.5 1.5H9.3V7H2.5ZM2.5 2.5H9.3M.7 3.5V8.8H7.5" />)}
          Aree di lavoro
        </MenuItem>
        <MenuItem $width={79}>
          {menuIcon(
            <>
              <circle cx="5" cy="3.2" r="2.5" fill="#d8d8d8" />
              <path d="M5 5V9.5" />
            </>
          )}
          Connessioni
        </MenuItem>
        <MenuItem $width={53.5}>
          {menuIcon(<circle cx="5" cy="5" r="3.8" strokeWidth="1.9" strokeDasharray="5 .8" />)}
          Guida
        </MenuItem>
        <MenuItem $width={50}>
          {menuIcon(<path d="M.7.8H7.3V5H2.5L.7 6.5ZM8.8 3V9.3L7.5 7.8H3" />)}
          Chat
        </MenuItem>
        <LiveBadge>
          <svg width="8" height="6" viewBox="0 0 8 6">
            <path d="M1.500 1.500H7.300V5.400H1.500ZM.5 4V.5H6" fill="none" stroke="#2bd42b" />
            <path d="M3.500 2.300L5.500 3.500L3.500 4.700Z" fill="#2bd42b" />
          </svg>
          Live
        </LiveBadge>
        <WindowButton>
          <svg width="7" height="7"><path d="M.5 5H6.5" stroke="#fff" strokeWidth="1.5" /></svg>
        </WindowButton>
        <WindowButton>
          <svg width="7" height="7"><path d="M1 1.500H6V6H1ZM1 2.200H6" stroke="#fff" fill="none" /></svg>
        </WindowButton>
        <WindowButton $close>
          <svg width="7" height="7"><path d="M1 1L6 6M6 1L1 6" stroke="#fff" strokeWidth="1.9" /></svg>
        </WindowButton>
      </TitleBar>
      <Grid>
        <GridRow $header>
          {headers.map((header, i) => (
            <Cell key={i} $header>
              {header}
            </Cell>
          ))}
        </GridRow>
        {accounts.map(([connection, name, cash, margin, net, gross, realized], row) => {
          const values = ["0.00", cash, margin, margin, "0.00", "0.00", net, gross, realized, "0.00", realized];
          return (
            <GridRow key={row} $selected={row === 4}>
              <Cell>{connection}</Cell>
              <Cell>{name}</Cell>
              {values.map((value, col) => (
                <Cell key={col} $green={col > 6 && value !== "0.00"}>
                  ${value}
                </Cell>
              ))}
            </GridRow>
          );
        })}
      </Grid>
      <TabBar>
        <StatusOrb />
        <Tab $width={43}>Ordini</Tab>
        <Tab $width={48}>Esecuzioni</Tab>
        <Tab $width={43.6}>Strategie</Tab>
        <Tab $width={42.4}>Posizioni</Tab>
        <Tab $width={45} $active>
          Conti
        </Tab>
        <Tab $width={43}>Registro</Tab>
        <Tab $width={44}>Messaggi</Tab>
        <Tab $width={14}>
          <LuPlus size={7} strokeWidth={4} color="#eee" />
        </Tab>
      </TabBar>
    </Window>
  );
}

/* ---------- footer ---------- */

const ScrollTrack = styled.div`
  height: 9px;
  flex: none;
  margin-left: 5px;
  background: #323433;
  display: flex;
`;

const ScrollArrow = styled.div`
  width: 6px;
  background: #111;
  color: #fff;
  font-size: 5px;
  line-height: 9px;
  text-align: center;
`;

const ScrollThumb = styled.div`
  width: 352px;
  margin-left: 1512px;
  background: linear-gradient(#626262, #585858 50%, #3d3d3d 55%, #3d3d3d);
  border: 1px solid #4d4d4d;
`;

const Workspaces = styled.div`
  height: 20px;
  flex: none;
  padding-left: 16px;
  background: ${theme.panel};
  border-bottom: 1px solid #3c383e;
  display: flex;
  gap: 1px;
`;

const WorkspaceTab = styled.div<{ $plus?: boolean }>`
  display: flex;
  align-items: center;
  justify-content: center;
  width: ${(p) => (p.$plus ? 14 : 50)}px;
  height: ${(p) => (p.$plus ? 13.5 : 15.5)}px;
  padding: ${(p) => (p.$plus ? 0 : "0 3px 3.5px 0")};
  color: ${(p) => (p.$plus ? "#ddd" : theme.blue)};
  background: ${(p) => (p.$plus ? "#3c3c3f" : "#1b1b1d")};
  ${(p) => !p.$plus && `border: 1px solid #1c66b4; border-top: 0;`}
  font-size: 7.8px;
  font-weight: 700;
  white-space: nowrap;
`;

const Taskbar = styled.div`
  flex: 1;
  display: flex;
  align-items: center;
  background: linear-gradient(90deg, #35123c 0%, #3c1338 14%, #3f1440 32%, #35143d 48%, #2a1737 62%, #311535 71%, #231a30 82%, #221b35 100%);
`;

const Weather = styled.div`
  display: flex;
  align-items: center;
  width: 766px;
  padding-left: 11px;
  gap: 3px;
  color: #efe6ef;
  font-size: 7.1px;
  line-height: 10px;
`;

const WeatherNote = styled.div`
  color: #d0c2d2;
`;

const SearchBox = styled.div`
  display: flex;
  align-items: center;
  gap: 6px;
  width: 132px;
  height: 18px;
  margin: 0 7px 0 7.5px;
  padding-left: 6px;
  border-radius: 9px;
  background: #f3f0f4;
  color: #77727a;
  font-size: 7.6px;
`;

const Apps = styled.div`
  display: flex;
  gap: 10.6px;
`;

const AppIcon = styled.div<{ $running?: boolean; $active?: boolean }>`
  position: relative;
  width: 16px;
  height: 16px;
  svg {
    display: block;
    overflow: visible;
  }
  ${(p) =>
    p.$active &&
    css`
      box-shadow: 0 0 0 4px #3d2339;
      background: #3d2339;
    `}
  ${(p) =>
    p.$running &&
    css`
      &::after {
        content: "";
        position: absolute;
        left: ${p.$active ? 3 : 6.5}px;
        bottom: -3.4px;
        width: ${p.$active ? 10 : 3.5}px;
        height: 1.7px;
        border-radius: 1px;
        background: ${p.$active ? "#69b8f2" : "#a99bab"};
      }
    `}
`;

const Badge = styled.div<{ $color: string }>`
  position: absolute;
  right: -4px;
  top: -3px;
  min-width: 11px;
  height: 9.5px;
  border-radius: 5px;
  background: ${(p) => p.$color};
  color: ${(p) => (p.$color === "#4cb8f0" ? "#123" : "#fff")};
  font-size: 6.5px;
  line-height: 9px;
  text-align: center;
`;

const icon = (children: ReactNode) => (
  <svg width="16" height="16" viewBox="0 0 16 16">
    {children}
  </svg>
);

const apps: { art: ReactNode; running?: boolean; active?: boolean; badge?: [string, string] }[] = [
  {
    art: icon(
      <>
        <rect x="1" y="5" width="10" height="9" rx="1" fill="#77707a" />
        <rect x="5" y="1.5" width="10" height="9" rx="1" fill="#eeeaef" />
      </>
    ),
  },
  {
    art: icon(
      <>
        <rect x=".5" y=".5" width="15" height="15" fill="#e9edf0" />
        <g fill="none" stroke="#6f9eb8" strokeWidth="1.8">
          <path d="M2.5 9.500A5.600 5.600 0 1 1 13.500 9.500" />
          <path d="M5.300 9A2.800 2.800 0 1 1 10.700 9" stroke="#8aa5b4" />
          <path d="M8 7V12.500M5.500 13.500H10.500" stroke="#7d8890" />
        </g>
      </>
    ),
  },
  {
    art: icon(
      <>
        <circle cx="8.5" cy="8" r="7.2" fill="#1586cf" />
        <path d="M6 1.200A7.200 7.200 0 0 1 15.700 8C15.700 11 12 11.500 10.500 10C12 7 9 5 6 1.200Z" fill="#4ad16c" />
        <path d="M6 8C6 12 9 13 13.500 12C10 16 4 14 6 8Z" fill="#0d4f9a" />
        <circle cx="4.5" cy="12" r="3.5" fill="#c9cdd0" />
        <circle cx="4.5" cy="11.3" r="1.3" fill="#6a6f74" />
      </>
    ),
  },
  {
    art: icon(
      <>
        <path d="M.5 2H6L8 4H15.500V14.500H.5Z" fill="#f0a92c" />
        <path d="M.5 6H15.500V14.500H.5Z" fill="#ffcf54" />
        <path d="M3 11H13V14.500H3Z" fill="#1c75c9" />
      </>
    ),
  },
  {
    art: icon(
      <>
        <path d="M5 4V1.500H11V4" fill="none" stroke="#2b9be8" strokeWidth="1.5" />
        <rect x="1" y="4" width="14" height="11.5" rx="1.5" fill="#eff3f7" />
        <path d="M5 6.500H7.700V9.200H5Z" fill="#e8512b" />
        <path d="M8.300 6.500H11V9.200H8.300Z" fill="#74b72c" />
        <path d="M5 9.800H7.700V12.500H5Z" fill="#2b9be8" />
        <path d="M8.300 9.800H11V12.500H8.300Z" fill="#f5b622" />
      </>
    ),
  },
  {
    art: icon(
      <>
        <path d="M1 7L9 1L15 6V13.500Q15 15 13.500 15H2.500Q1 15 1 13.500Z" fill="#3aa0ec" />
        <path d="M6 4L9 2L14 6.500V9L9 12L6 10Z" fill="#a9e0ff" />
        <path d="M1 7L9 12.500L15 7V14L13.500 15H2.500L1 14Z" fill="#1b70cc" />
        <path d="M9 12.500L15 7V14Z" fill="#53c0f2" />
        <rect x="1" y="9" width="7" height="6" rx="1" fill="#2384dd" />
        <circle cx="4.5" cy="12" r="1.6" fill="none" stroke="#fff" />
      </>
    ),
  },
  {
    art: icon(
      <>
        <rect x=".5" y=".5" width="15" height="15" rx="3" fill="#101012" />
        <path d="M2.500 5H7.500V11H5.200V7.200H2.500ZM11.500 5H14L11.500 11H9Z" fill="#fff" />
        <circle cx="9.3" cy="6.2" r="1.2" fill="#fff" />
      </>
    ),
  },
  {
    art: icon(
      <>
        <rect x="2" y=".5" width="12" height="15" rx="1" fill="#596069" />
        <rect x="3" y="1.5" width="10" height="3" fill="#6ec1ee" />
        {[6, 9, 12].map((y) => (
          <path key={y} d={`M3 ${y}H5.700V${y + 2}H3ZM6.700 ${y}H9.400V${y + 2}H6.700ZM10.300 ${y}H13V${y + 2}H10.300Z`} fill="#d7dadd" />
        ))}
      </>
    ),
  },
  {
    art: icon(
      <g fill="none" stroke="#26806e" strokeWidth="2.4">
        <path d="M8 8C6 6 6 3 8 2M8 8C10 6 13 6 14 8M8 8C10 10 10 13 8 14M8 8C6 10 3 10 2 8" />
        <path d="M11 3L12.500 4.500M12.500 12L11 13.500M3.500 11.500L5 13M3.500 4.500L5 3" strokeWidth="1.8" />
      </g>
    ),
  },
  {
    art: icon(
      <>
        <circle cx="10" cy="3" r="2.6" fill="#7b86ea" />
        <circle cx="4.5" cy="5" r="2" fill="#5c66cf" />
        <path d="M6.500 6.500H14.500V11.500Q14.500 15.500 10.500 15.500T6.500 11.500Z" fill="#7b86ea" />
        <rect x="1" y="7.5" width="8.5" height="7.5" rx="1" fill="#4e5bc6" />
        <path d="M3 9.500H7.500M5.200 9.500V13.500" stroke="#cdd2ff" strokeWidth="1.2" />
      </>
    ),
  },
  {
    running: true,
    art: icon(
      <>
        <circle cx="8" cy="8" r="7.4" fill="#f7c52b" />
        <path d="M1.600 4.300A7.400 7.400 0 0 1 14.400 4.300L8 8Z" fill="#e74336" />
        <path d="M1.600 4.300A7.400 7.400 0 0 0 8 15.400L10 10L8 8Z" fill="#2fa152" />
        <circle cx="8" cy="8" r="3.7" fill="#fff" />
        <circle cx="8" cy="8" r="2.9" fill="#3c83ef" />
      </>
    ),
  },
  {
    running: true,
    badge: ["42", "#4cb8f0"],
    art: icon(
      <>
        <path d="M1 15L2 11.500A6.600 6.600 0 1 1 4.800 14Z" fill="none" stroke="#2bd366" strokeWidth="1.6" />
        <path d="M5.200 5.500C5.500 9 8 11 10.800 11" fill="none" stroke="#2bd366" strokeWidth="1.9" />
      </>
    ),
  },
  {
    running: true,
    active: true,
    art: icon(
      <path
        d="M0 2.500H3.800L7 6L9 2.500H16V6H13.800V13.500H11V6.500L8.700 8.500L10.500 13.500H7L3.500 8.500L4.500 13.500H.5L2 8Z"
        fill="#f23c10"
      />
    ),
  },
  {
    running: true,
    badge: ["84", "#e04b3b"],
    art: icon(
      <>
        <circle cx="7.5" cy="8.5" r="7" fill="#30a4dd" />
        <path d="M3 8.500L12 5L10.500 12.500L7.500 10.300L6 12V9.500Z" fill="#fff" />
      </>
    ),
  },
  {
    running: true,
    art: icon(
      <>
        <rect x="1" y=".5" width="12" height="12.5" rx="1.5" fill="#f4eff0" />
        <rect x="3.5" y="3" width="7" height="6.5" fill="none" stroke="#d9363a" strokeWidth="1.5" strokeDasharray="2 1" />
        <path d="M8 9L15.500 10M10 15.500L12 8.500" stroke="#2b8ed8" strokeWidth="1.7" />
      </>
    ),
  },
];

export default function App() {
  return (
    <>
      <GlobalStyle />
      <Screen>
        <Toolbar>
          <ChartTag>Grafico</ChartTag>
          <ToolbarSelect $left={10} $width={75}>
            ES MAR26 {chevron}
          </ToolbarSelect>
          <ToolbarSelect $left={5} $width={75}>
            ninZaRenko 12/4 {chevron}
          </ToolbarSelect>
          <ToolbarIcons>
            <svg viewBox="0 0 12 12" stroke="currentColor">
              <path d="M2.500 4V11M6 2V11M9.500 3V10" strokeWidth="2.2" />
              <path d="M2.500 2.500V12M6 .5V12M9.500 1V12" strokeWidth=".8" />
            </svg>
            <svg viewBox="0 0 12 12" fill="none" stroke="currentColor">
              <path d="M1.500 1.500L9 9" strokeWidth="3.2" />
              <path d="M8.500 8.500L11.500 11.500" strokeWidth="1.6" />
            </svg>
            <LuZoomIn strokeWidth={3} />
            <LuZoomOut strokeWidth={3} />
            <LuPlus strokeWidth={2.4} />
            <LuFileSearch strokeWidth={2.6} />
            <svg viewBox="0 0 12 12" fill="currentColor">
              <path d="M0 1H12V12H8V4H0ZM0 6H5V7.500H0Z" />
            </svg>
            <svg viewBox="0 0 12 12" fill="none" stroke="currentColor" strokeWidth="1.2">
              <path d="M1 3.500V1H3.500M8.500 1H11V3.500M11 8.500V11H8.500M3.500 11H1V8.500" />
              <path d="M2.500 9.500L5 5.500L6 7L7.500 4L9.800 9.500Z" fill="currentColor" />
            </svg>
            <svg viewBox="0 0 12 12" fill="none" stroke="currentColor" strokeWidth="1.4">
              <path d="M1 11L4 2.500L8 9.500L11 1.500" />
              <path d="M3 2.500H5M7 9.500H9M10 1.500H12M0 11H2" strokeWidth="1.8" />
            </svg>
            <LuClipboardCheck strokeWidth={2.6} />
            <LuList strokeWidth={3} />
          </ToolbarIcons>
        </Toolbar>
        <PriceChart />
        <DeltaChart />
        <ScrollTrack>
          <ScrollArrow>◂</ScrollArrow>
          <ScrollThumb />
        </ScrollTrack>
        <Workspaces>
          <WorkspaceTab>ES MAR26</WorkspaceTab>
          <WorkspaceTab $plus>
            <LuPlus size={8} strokeWidth={3.5} />
          </WorkspaceTab>
        </Workspaces>
        <Taskbar>
          <Weather>
            <svg width="16" height="20" viewBox="0 0 16 20">
              <circle cx="8" cy="12" r="5.5" fill="#f5a623" />
              <circle cx="4" cy="7" r="3.3" fill="#cfe6f7" />
              <rect x="6" y="13" width="9" height="4.5" rx="2.2" fill="#dcecf8" />
              <circle cx="12" cy="5" r="4.5" fill="#d2391c" />
              <text x="12" y="7.5" fontSize="6.5" fill="#fff" textAnchor="middle">
                1
              </text>
            </svg>
            <div>
              16°C
              <WeatherNote>Parzial. sereno</WeatherNote>
            </div>
          </Weather>
          <svg width="15" height="15" viewBox="0 0 15 15">
            <path d="M0 0H7.200V7.200H0ZM7.800 0H15V7.200H7.800ZM0 7.800H7.200V15H0ZM7.800 7.800H15V15H7.800Z" fill="#35b5f2" />
          </svg>
          <SearchBox>
            <LuSearch size={10} strokeWidth={3} color="#333" />
            Cerca
          </SearchBox>
          <Apps>
            {apps.map((app, i) => (
              <AppIcon key={i} $running={app.running} $active={app.active}>
                {app.art}
                {app.badge && <Badge $color={app.badge[1]}>{app.badge[0]}</Badge>}
              </AppIcon>
            ))}
          </Apps>
        </Taskbar>
        <OrderEntry />
        <AccountsWindow />
      </Screen>
    </>
  );
}
